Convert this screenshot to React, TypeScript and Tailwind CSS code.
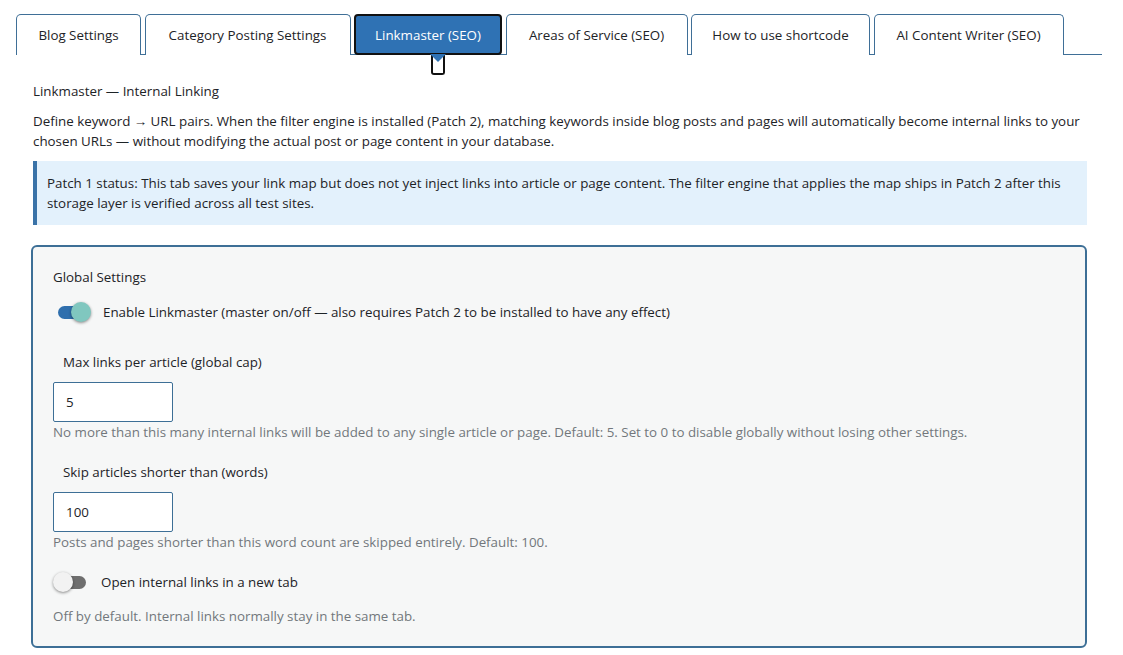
import React, { useState } from "react";

const tabs: { label: string; w: string }[] = [
  { label: "Blog Settings", w: "w-[125px]" },
  { label: "Category Posting Settings", w: "w-[206px]" },
  { label: "Linkmaster (SEO)", w: "w-[148px]" },
  { label: "Areas of Service (SEO)", w: "w-[182px]" },
  { label: "How to use shortcode", w: "w-[179px]" },
  { label: "AI Content Writer (SEO)", w: "w-[190px]" },
];

const Toggle: React.FC<{ on: boolean; onChange: () => void }> = ({ on, onChange }) => (
  <button
    type="button"
    onClick={onChange}
    className="relative w-[36px] h-[20px] flex items-center shrink-0"
  >
    <span
      className={
        on
          ? "absolute left-[3px] right-[3px] h-[13px] rounded-full bg-[#2f6fad]"
          : "absolute left-[3px] right-[3px] h-[13px] rounded-full bg-[#6e6e6e]"
      }
    />
    <span
      className={
        on
          ? "absolute right-0 w-[20px] h-[20px] rounded-full bg-[#80c7bf] shadow-[0_1px_3px_rgba(0,0,0,0.45)]"
          : "absolute left-0 w-[20px] h-[20px] rounded-full bg-[#f2f2f2] shadow-[0_1px_3px_rgba(0,0,0,0.45)]"
      }
    />
  </button>
);

const App: React.FC = () => {
  const [active, setActive] = useState<number>(2);
  const [enabled, setEnabled] = useState<boolean>(true);
  const [newTab, setNewTab] = useState<boolean>(false);
  const [maxLinks, setMaxLinks] = useState<string>("5");
  const [minWords, setMinWords] = useState<string>("100");

  return (
    <div className="w-[1123px] h-[655px] bg-white text-[#1d2327] text-[13.35px] leading-[20px] font-['Segoe_UI','Open_Sans',sans-serif] overflow-hidden">
      {/* Tabs */}
      <div className="pt-[14px] pl-[16px] pr-[21px]">
        <div className="flex gap-[3.5px] border-b border-[#3f6f97]">
          {tabs.map((t, i) =>
            i === active ? (
              <div key={t.label} className={"relative shrink-0 " + t.w}>
                <button
                  onClick={() => setActive(i)}
                  className="w-full h-[41px] -mb-px whitespace-nowrap bg-[#2f72b4] text-white border-2 border-[#111] rounded-[4px]"
                >
                  {t.label}
                </button>
                {/* pointer */}
                <span className="absolute left-[77px] top-[40px] w-[14px] h-[21px] border-2 border-[#111] border-t-0 rounded-b-[3px] bg-white" />
                <span className="absolute left-[76px] top-[40px] w-0 h-0 border-l-[8px] border-r-[8px] border-t-[8px] border-l-transparent border-r-transparent border-t-[#2f72b4]" />
              </div>
            ) : (
              <button
                key={t.label}
                onClick={() => setActive(i)}
                className={"shrink-0 h-[41px] -mb-px whitespace-nowrap bg-white border border-b-0 border-[#3f6f97] rounded-t-[5px] " + t.w}
              >
                {t.label}
              </button>
            )
          )}
        </div>
      </div>

      <div className="pl-[33px] pr-[36px]">
        <div className="mt-[26px]">Linkmaster — Internal Linking</div>
        <p className="mt-[10px]">
          Define keyword → URL pairs. When the filter engine is installed (Patch 2), matching keywords inside blog posts and pages will automatically become internal links to your chosen URLs — without modifying the actual post or page content in your database.
        </p>

        {/* Notice */}
        <div className="mt-[10px] bg-[#e3f1fc] border-l-4 border-[#3a73a8] pl-[10px] pr-[14px] py-[12px]">
          Patch 1 status: This tab saves your link map but does not yet inject links into article or page content. The filter engine that applies the map ships in Patch 2 after this storage layer is verified across all test sites.
        </div>

        {/* Card */}
        <div className="mt-[20px] -ml-[2px] bg-[#f6f7f7] border-2 border-[#3d6f96] rounded-[6px] pl-[20px] pr-[20px] pt-[20px] pb-[20px]">
          <div>Global Settings</div>

          <label className="mt-[15px] ml-[2px] flex items-center gap-[12px] cursor-pointer">
            <Toggle on={enabled} onChange={() => setEnabled(!enabled)} />
            <span>Enable Linkmaster (master on/off — also requires Patch 2 to be installed to have any effect)</span>
          </label>

          <div className="mt-[30px] ml-[10px]">Max links per article (global cap)</div>
          <input
            value={maxLinks}
            onChange={(e) => setMaxLinks(e.target.value)}
            className="mt-[10px] block w-[120px] h-[40px] px-[12px] bg-white border border-[#3d6f96] rounded-[2px] outline-none"
          />
          <div className="text-[#72777c]">
            No more than this many internal links will be added to any single article or page. Default: 5. Set to 0 to disable globally without losing other settings.
          </div>

          <div className="mt-[20px] ml-[10px]">Skip articles shorter than (words)</div>
          <input
            value={minWords}
            onChange={(e) => setMinWords(e.target.value)}
            className="mt-[10px] block w-[120px] h-[40px] px-[12px] bg-white border border-[#3d6f96] rounded-[2px] outline-none"
          />
          <div className="text-[#72777c]">Posts and pages shorter than this word count are skipped entirely. Default: 100.</div>

          <label className="mt-[20px] flex items-center gap-[12px] cursor-pointer">
            <Toggle on={newTab} onChange={() => setNewTab(!newTab)} />
            <span>Open internal links in a new tab</span>
          </label>

          <div className="mt-[14px] text-[#72777c]">Off by default. Internal links normally stay in the same tab.</div>
        </div>
      </div>
    </div>
  );
};

export default App;
